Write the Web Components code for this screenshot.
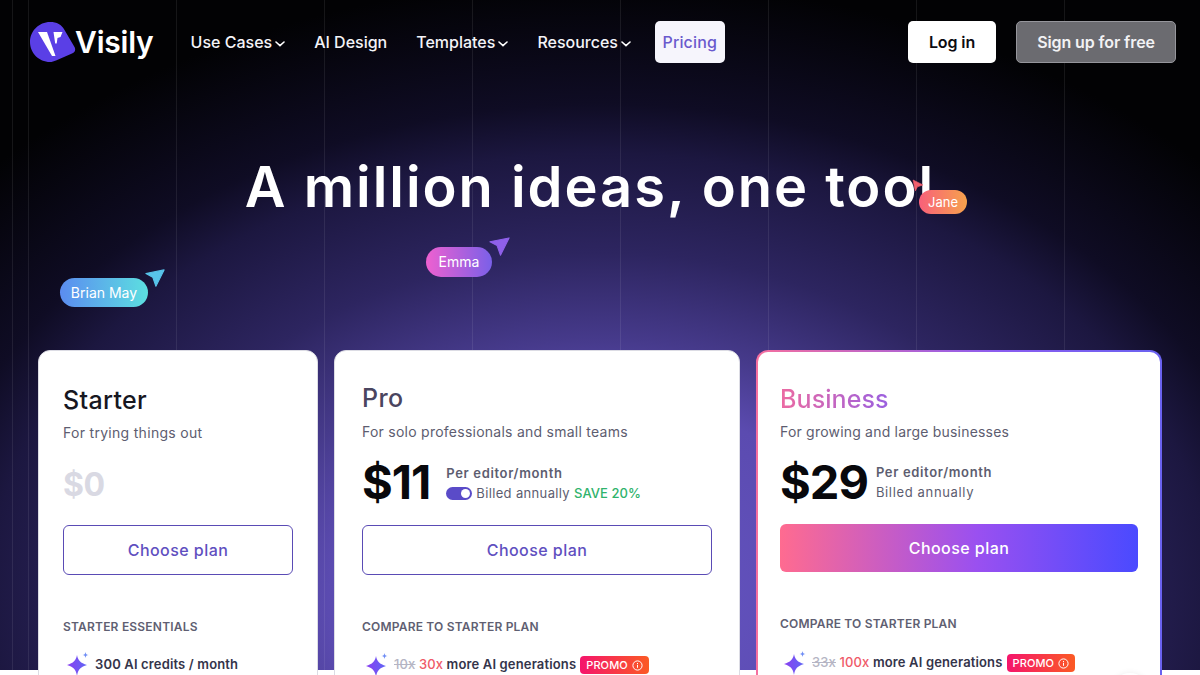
<!DOCTYPE html>
<html lang="en">
<head>
<meta charset="utf-8">
<title>Visily pricing</title>
<style>
    html, body { margin: 0; height: 675px; overflow: hidden; background: #fff; }
    body { font-family: Inter, "Noto Sans", sans-serif; }
</style>
</head>
<body>
<pricing-page></pricing-page>

<script>
const SPARK = `
    <svg width="24" height="24" viewBox="0 0 24 24">
        <defs><linearGradient id="sp" x1="0" y1="0.5" x2="1" y2="0.5">
            <stop offset="0" stop-color="#8a3ff0"/><stop offset="1" stop-color="#5f66f5"/>
        </linearGradient></defs>
        <path d="M11 3c1 5.500 3.500 8 10 10-6.500 2-9 4.500-10 11-1-6.500-3.500-9-10-11 6.500-2 9-4.500 10-10z" fill="url(#sp)"/>
        <path d="M19.500 0c.3 2 1 2.700 3 3-2 .3-2.700 1-3 3-.3-2-1-2.700-3-3 2-.3 2.700-1 3-3z" fill="#6d8cf5"/>
    </svg>`;

class SiteLogo extends HTMLElement {
    constructor() {
        super();
        const shadow = this.attachShadow({mode: "open"});
        shadow.innerHTML = `
            <style>
                :host { display: flex; align-items: center; gap: 0; }
                svg { display: block; }
                span { font-size: 30px; font-weight: 600; color: #fff; letter-spacing: -0.2px; line-height: 40px; margin-left: -1px; }
            </style>
            <svg width="46" height="40" viewBox="0 0 46 40">
                <path d="M20 0c7 0 11.500 2.500 14.500 8l10 17c1.500 3 .5 5.500-2.500 6.500l-16 7c-2 .9-4 1.500-6 1.500C9 40 0 31 0 20S9 0 20 0z" fill="#5a3fe6"/>
                <path d="M8 10h9l8.500 24h-3.500z" fill="#fff"/>
                <path d="M23.500 10h9l-2 5-3 1-.8 5.500h-1.500z" fill="#fff"/>
            </svg>
            <span>Visily</span>
        `;
    }
}

class NavItem extends HTMLElement {
    constructor() {
        super();
        const shadow = this.attachShadow({mode: "open"});
        const caret = this.hasAttribute("menu")
            ? `<svg width="10" height="6" viewBox="0 0 10 6"><path d="M1 1l4 3.600L9 1" fill="none" stroke="#fff" stroke-width="1.600" stroke-linecap="round"/></svg>`
            : "";
        shadow.innerHTML = `
            <style>
                :host { display: flex; align-items: center; gap: 3px; font-size: 16px; font-weight: 500; color: #f4f4f8; height: 42px; white-space: nowrap; }
                :host([active]) { background: #f6f5fc; color: #6a5acd; border-radius: 5px; padding: 0 7.500px; margin-left: -5px; letter-spacing: .15px; }
                svg { margin-top: 3px; }
            </style>
            <slot></slot>${caret}
        `;
    }
}

class SiteHeader extends HTMLElement {
    constructor() {
        super();
        const shadow = this.attachShadow({mode: "open"});
        shadow.innerHTML = `
            <style>
                :host { display: flex; align-items: center; height: 42px; padding: 21px 24px 21px 30px; }
                nav { display: flex; align-items: center; gap: 29px; margin-left: 37px; }
                .right { margin-left: auto; display: flex; gap: 20px; }
                button { font: 600 16px Inter, sans-serif; height: 42px; border-radius: 5px; border: 0; padding: 0; letter-spacing: -.1px; }
                .login { width: 88px; background: #fff; color: #0c0c12; }
                .signup { width: 160px; background: #6b6b70; color: #f2f2f4; border: 1px solid #96969c; }
            </style>
            <site-logo></site-logo>
            <nav>
                <nav-item menu>Use Cases</nav-item>
                <nav-item>AI Design</nav-item>
                <nav-item menu>Templates</nav-item>
                <nav-item menu>Resources</nav-item>
                <nav-item active>Pricing</nav-item>
            </nav>
            <div class="right">
                <button class="login">Log in</button>
                <button class="signup">Sign up for free</button>
            </div>
        `;
    }
}

class UserCursor extends HTMLElement {
    constructor() {
        super();
        const shadow = this.attachShadow({mode: "open"});
        shadow.innerHTML = `
            <style>
                :host { position: absolute; display: block; }
                .pill {
                    position: absolute; left: 0; top: 0; height: var(--h); line-height: var(--h); width: var(--w);
                    text-align: center; border-radius: 15px; color: #fff; font-size: var(--fs, 14px);
                    background: var(--pill); white-space: nowrap;
                }
                svg { position: absolute; left: var(--ax); top: var(--ay); width: var(--as, 22px); height: auto; transform: rotate(var(--rot, 0deg)); overflow: visible; }
            </style>
            <svg viewBox="0 0 22 20"><path d="M1 5L21 1 12 19 8.500 9z" fill="var(--arrow)" stroke="var(--arrow)" stroke-width="1.200" stroke-linejoin="round"/></svg>
            <div class="pill"><slot></slot></div>
        `;
    }
}

class HeroBlock extends HTMLElement {
    constructor() {
        super();
        const shadow = this.attachShadow({mode: "open"});
        shadow.innerHTML = `
            <style>
                :host { display: block; height: 266px; }
                h1 { margin: 0; padding: 69px 20px 0 0; text-align: center; color: #fff; font-size: 56px; line-height: 68px; font-weight: 600; letter-spacing: 1.970px; }
            </style>
            <h1>A million ideas, one tool</h1>
        `;
    }
}

class PlanCard extends HTMLElement {
    constructor() {
        super();
        const shadow = this.attachShadow({mode: "open"});
        shadow.innerHTML = `
            <style>
                :host {
                    display: block; box-sizing: border-box; height: 400px; background: #fff;
                    border: 1px solid #dcdce4; border-radius: 12px; padding: var(--top, 33px) var(--side, 24px) 0;
                }
                :host([featured]) {
                    border: 2px solid transparent; padding-left: 22px; padding-right: 22px;
                    background: linear-gradient(#fff, #fff) padding-box, linear-gradient(90deg, #f56f9f, #8a5cf0 60%, #6a62f0) border-box;
                }
                h2 { margin: 0; font-size: 25px; line-height: 32px; font-weight: 500; color: var(--title, #17171f); letter-spacing: var(--title-ls, .35px); }
                :host([featured]) h2 { width: max-content; color: transparent; background: linear-gradient(90deg, #ec6aa2, #9a60e0); -webkit-background-clip: text; background-clip: text; }
                .sub { margin: var(--sub-gap, 6px) 0 0; height: 22px; font-size: 14px; line-height: 22px; color: #5d5d70; letter-spacing: var(--sub-ls, .3px); }
                .price { height: 62px; margin-top: var(--price-gap, 10px); }
                .cta { display: block; margin-top: var(--cta-gap, 9px); }
                h3 { margin: var(--label-gap, 44px) 0 0; font-size: 12px; line-height: 16px; font-weight: 600; color: #5f5f72; letter-spacing: .2px; }
                .rows { margin-top: var(--rows-gap, 17px); }
            </style>
            <h2><slot name="title"></slot></h2>
            <p class="sub"><slot name="sub"></slot></p>
            <div class="price"><slot name="price"></slot></div>
            <div class="cta"><slot name="cta"></slot></div>
            <h3><slot name="label"></slot></h3>
            <div class="rows"><slot></slot></div>
        `;
    }
}

class PlanPrice extends HTMLElement {
    constructor() {
        super();
        const shadow = this.attachShadow({mode: "open"});
        shadow.innerHTML = `
            <style>
                :host { display: flex; align-items: center; gap: var(--price-meta, 14px); height: 62px; }
                .amount { font-size: 47px; line-height: 62px; font-weight: 700; color: #08080c; letter-spacing: -1px; }
                :host([free]) .amount { font-size: 32px; color: #d9d9e3; letter-spacing: -.5px; }
                .meta { font-size: 13px; line-height: 20px; color: #5d5d70; letter-spacing: .65px; margin-top: var(--meta-top, 0); }
            </style>
            <span class="amount"><slot></slot></span>
            <span class="meta"><slot name="meta"></slot></span>
        `;
    }
}

class BillingLine extends HTMLElement {
    constructor() {
        super();
        const shadow = this.attachShadow({mode: "open"});
        shadow.innerHTML = `
            <style>
                :host { display: flex; align-items: center; gap: 4px; white-space: nowrap; font-size: 13px; letter-spacing: .35px; }
                .toggle { width: 26px; height: 13px; border-radius: 7px; background: #5a4bc8; position: relative; flex: none; }
                .toggle:after { content: ""; position: absolute; right: 2px; top: 2px; width: 9px; height: 9px; border-radius: 50%; background: #fff; }
                .save { color: #2fb36c; font-weight: 500; letter-spacing: .05px; }
            </style>
            <span class="toggle"></span><span>Billed annually</span><span class="save">SAVE 20%</span>
        `;
    }
}

class PlanButton extends HTMLElement {
    constructor() {
        super();
        const shadow = this.attachShadow({mode: "open"});
        shadow.innerHTML = `
            <style>
                :host { display: flex; align-items: center; justify-content: center; box-sizing: border-box; height: 50px; border: 1px solid #5a4bb5; border-radius: 6px; color: #5f4fc0; font-size: 16px; font-weight: 500; letter-spacing: .45px; }
                :host([filled]) { height: 48px; border: 0; color: #fff; background: linear-gradient(90deg, #ff6b90, #9a50f0 55%, #4a4aff); }
            </style>
            <slot></slot>
        `;
    }
}

class FeatureRow extends HTMLElement {
    constructor() {
        super();
        const shadow = this.attachShadow({mode: "open"});
        shadow.innerHTML = `
            <style>
                :host { display: flex; align-items: center; gap: 5px; height: 24px; padding-left: 3px; font-size: 13px; font-weight: 600; color: #34344a; white-space: nowrap; letter-spacing: .15px; }
                svg { flex: none; display: block; }
            </style>
            ${SPARK}<slot></slot>
        `;
    }
}

class PromoTag extends HTMLElement {
    constructor() {
        super();
        const shadow = this.attachShadow({mode: "open"});
        shadow.innerHTML = `
            <style>
                :host { display: inline-flex; align-items: center; gap: 4px; height: 18px; padding: 0 6px; margin-left: 4px; border-radius: 4px; color: #fff; font-size: 11px; font-weight: 500; background: linear-gradient(90deg, #f5156c, #fb5a24); letter-spacing: .1px; }
            </style>
            PROMO
            <svg width="11" height="11" viewBox="0 0 11 11"><circle cx="5.500" cy="5.500" r="4.600" fill="none" stroke="#fff"/><path d="M5.500 4.800v3M5.500 3v1" stroke="#fff"/></svg>
        `;
    }
}

class PricingPage extends HTMLElement {
    constructor() {
        super();
        const shadow = this.attachShadow({mode: "open"});
        shadow.innerHTML = `
            <style>
                :host {
                    display: block; position: relative; height: 675px; overflow: hidden;
                    background-color: #fff;
                    background-image:
                        repeating-linear-gradient(90deg, rgba(255,255,255,.08) 0 1px, transparent 1px 148px),
                        radial-gradient(ellipse 850px 620px at 600px 600px, #6655c4 0%, #5b4bb0 32%, #463a8b 42%, #2d2560 56%, #1c1740 72%, #0f0c24 80%, #020204 100%);
                    background-size: 100% 670px;
                    background-position: 28px 0, 0 0;
                    background-repeat: repeat-x, no-repeat;
                }
                .plans { display: grid; grid-template-columns: 280px 406px 406px; gap: 16px; padding-left: 38px; }
                .old { color: #b5b5c4; text-decoration: line-through; font-weight: 500; }
                .new { color: #ef5a68; font-weight: 500; }
                .per { display: block; font-weight: 600; }
                .pro { --title: #4a4560; --top: 31px; --side: 27px; --sub-gap: 7px; --price-gap: 8px; --cta-gap: 12px; --rows-gap: 18px; --price-meta: 16px; --meta-top: 2px; --sub-ls: .25px; }
                .biz { --top: 31px; --price-gap: 8px; --cta-gap: 11px; --rows-gap: 19px; --price-meta: 8px; --title-ls: .1px; --sub-ls: .2px; }
                .brian { left: 60px; top: 278px; --h: 29px; --w: 88px; --ax: 85px; --ay: -9px; --as: 20px; --pill: linear-gradient(90deg, #5b8cf0, #5cdfe0); --arrow: #58c4ea; }
                .emma { left: 426px; top: 247px; --h: 30px; --w: 66px; --ax: 63px; --ay: -10px; --as: 21px; --pill: linear-gradient(90deg, #ee60d0, #7a60e8); --arrow: #8f60ea; }
                .jane { left: 919px; top: 190px; --h: 24px; --w: 48px; --fs: 13px; --ax: -7px; --ay: -10px; --as: 12px; --rot: -90deg; --pill: linear-gradient(90deg, #f8607a, #f6a24c); --arrow: #f2606e; }
                .chat { position: absolute; left: 1112px; top: 673px; width: 36px; height: 36px; border-radius: 50%; background: #fff; box-shadow: 0 0 6px rgba(0,0,0,.07); }
            </style>
            <site-header></site-header>
            <hero-block></hero-block>
            <user-cursor class="jane">Jane</user-cursor>
            <user-cursor class="emma">Emma</user-cursor>
            <user-cursor class="brian">Brian May</user-cursor>
            <div class="plans">
                <plan-card>
                    <span slot="title">Starter</span>
                    <span slot="sub">For trying things out</span>
                    <plan-price slot="price" free>$0</plan-price>
                    <plan-button slot="cta">Choose plan</plan-button>
                    <span slot="label">STARTER ESSENTIALS</span>
                    <feature-row>300 AI credits / month</feature-row>
                </plan-card>
                <plan-card class="pro">
                    <span slot="title">Pro</span>
                    <span slot="sub">For solo professionals and small teams</span>
                    <plan-price slot="price">$11
                        <span slot="meta"><span class="per">Per editor/month</span><billing-line></billing-line></span>
                    </plan-price>
                    <plan-button slot="cta">Choose plan</plan-button>
                    <span slot="label">COMPARE TO STARTER PLAN</span>
                    <feature-row><span><span class="old">10x</span> <span class="new">30x</span> more AI generations<promo-tag></promo-tag></span></feature-row>
                </plan-card>
                <plan-card class="biz" featured>
                    <span slot="title">Business</span>
                    <span slot="sub">For growing and large businesses</span>
                    <plan-price slot="price">$29
                        <span slot="meta"><span class="per">Per editor/month</span>Billed annually</span>
                    </plan-price>
                    <plan-button slot="cta" filled>Choose plan</plan-button>
                    <span slot="label">COMPARE TO STARTER PLAN</span>
                    <feature-row><span><span class="old">33x</span> <span class="new">100x</span> more AI generations<promo-tag></promo-tag></span></feature-row>
                </plan-card>
            </div>
            <div class="chat"></div>
        `;
    }
}

customElements.define("site-logo", SiteLogo);
customElements.define("nav-item", NavItem);
customElements.define("site-header", SiteHeader);
customElements.define("user-cursor", UserCursor);
customElements.define("hero-block", HeroBlock);
customElements.define("plan-card", PlanCard);
customElements.define("plan-price", PlanPrice);
customElements.define("billing-line", BillingLine);
customElements.define("plan-button", PlanButton);
customElements.define("feature-row", FeatureRow);
customElements.define("promo-tag", PromoTag);
customElements.define("pricing-page", PricingPage);
</script>
</body>
</html>
